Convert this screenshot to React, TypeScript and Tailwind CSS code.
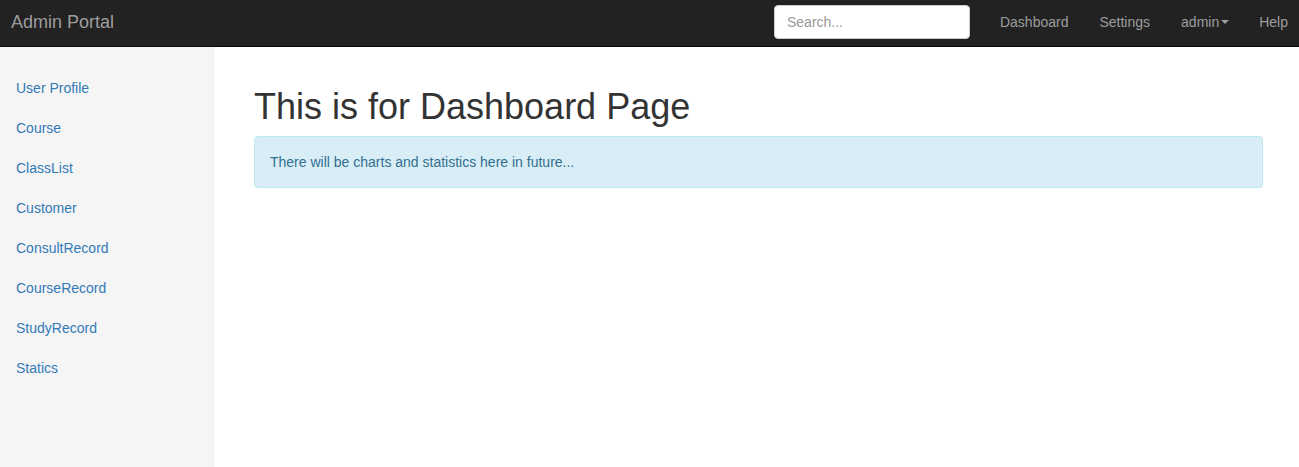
import React from 'react';

const sideLinks = [
  'User Profile',
  'Course',
  'ClassList',
  'Customer',
  'ConsultRecord',
  'CourseRecord',
  'StudyRecord',
  'Statics',
];

function Navbar() {
  return (
    <nav className="h-[47px] pb-[2px] bg-[#222] border-b border-[#080808] flex items-center justify-between">
      <a className="pl-[11px] text-[18px] leading-[20px] text-[#9d9d9d]">Admin Portal</a>
      <div className="flex items-center">
        <input
          type="text"
          placeholder="Search..."
          className="w-[196px] h-[34px] px-3 rounded-[4px] bg-white border border-[#ccc] text-[14px] text-[#555] placeholder-[#999] outline-none"
        />
        <ul className="flex items-center ml-[15px] mr-[-4px] text-[14px] leading-[20px] text-[#9d9d9d]">
          <li className="px-[15px] pr-[16px]">Dashboard</li>
          <li className="px-[15px] pr-[16px]">Settings</li>
          <li className="px-[15px] flex items-center">
            admin
            <span className="ml-[2px] w-0 h-0 border-t-[4px] border-t-[#9d9d9d] border-x-[4px] border-x-transparent" />
          </li>
          <li className="px-[15px]">Help</li>
        </ul>
      </div>
    </nav>
  );
}

function Sidebar() {
  return (
    <div className="w-[214px] shrink-0 bg-[#f5f5f5] border-r border-[#eee] pt-[21px]">
      <ul>
        {sideLinks.map((l) => (
          <li key={l}>
            <a className="block px-4 py-[10px] text-[14px] leading-[20px] text-[#337ab7]">{l}</a>
          </li>
        ))}
      </ul>
    </div>
  );
}

export default function App() {
  return (
    <div className="h-[467px] flex flex-col bg-white font-['Liberation_Sans',Arial,sans-serif] text-[#333]">
      <Navbar />
      <div className="flex flex-1 min-h-0">
        <Sidebar />
        <main className="flex-1 pl-10 pr-[36px] pt-5">
          <h1 className="mt-5 mb-[9px] text-[36px] leading-[1.1] font-normal text-[#333]">
            This is for Dashboard Page
          </h1>
          <div className="px-[15px] py-[15px] rounded-[4px] bg-[#d9edf7] border border-[#bce8f1] text-[#31708f] text-[14px] leading-[20px]">
            There will be charts and statistics here in future...
          </div>
        </main>
      </div>
    </div>
  );
}
